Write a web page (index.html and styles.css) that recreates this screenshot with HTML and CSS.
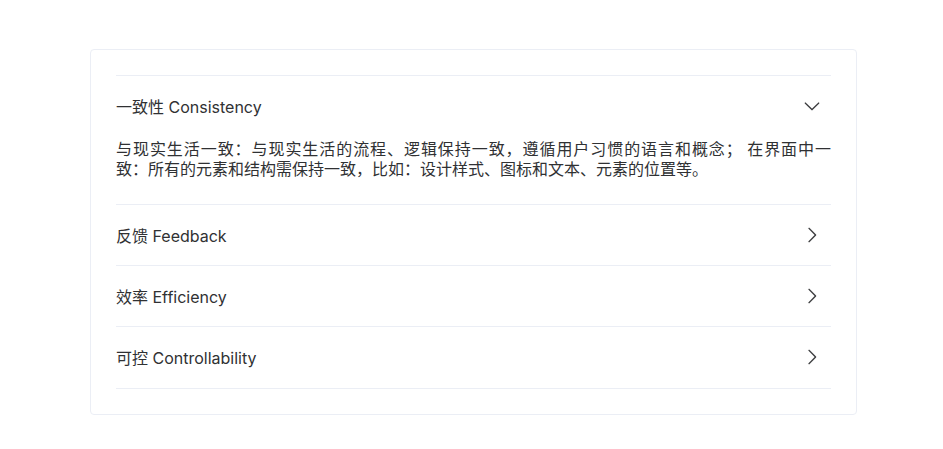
FILE: index.html
```html
<!DOCTYPE html>
<html lang="zh-CN">
<head>
<meta charset="utf-8">
<title>Collapse</title>
<link rel="stylesheet" href="styles.css">
</head>
<body>
<div class="page">
  <div class="card">
    <div class="collapse">
      <div class="item active">
        <div class="header">
          <span class="title">一致性 Consistency</span>
          <svg class="arrow down" viewBox="0 0 1024 1024"><path d="M340.864 149.312a30.592 30.592 0 0 0 0 42.752L652.736 512 340.864 831.872a30.592 30.592 0 0 0 0 42.752 29.12 29.12 0 0 0 41.728 0L714.24 534.336a32 32 0 0 0 0-44.672L382.592 149.376a29.12 29.12 0 0 0-41.728 0z"/></svg>
        </div>
        <div class="content">
          <span class="line first">与现实生活一致：与现实生活的流程、逻辑保持一致，遵循用户习惯的语言和概念； 在界面中一</span>
          <span class="line">致：所有的元素和结构需保持一致，比如：设计样式、图标和文本、元素的位置等。</span>
        </div>
      </div>
      <div class="item">
        <div class="header">
          <span class="title">反馈 Feedback</span>
          <svg class="arrow" viewBox="0 0 1024 1024"><path d="M340.864 149.312a30.592 30.592 0 0 0 0 42.752L652.736 512 340.864 831.872a30.592 30.592 0 0 0 0 42.752 29.12 29.12 0 0 0 41.728 0L714.24 534.336a32 32 0 0 0 0-44.672L382.592 149.376a29.12 29.12 0 0 0-41.728 0z"/></svg>
        </div>
      </div>
      <div class="item">
        <div class="header">
          <span class="title">效率 Efficiency</span>
          <svg class="arrow" viewBox="0 0 1024 1024"><path d="M340.864 149.312a30.592 30.592 0 0 0 0 42.752L652.736 512 340.864 831.872a30.592 30.592 0 0 0 0 42.752 29.12 29.12 0 0 0 41.728 0L714.24 534.336a32 32 0 0 0 0-44.672L382.592 149.376a29.12 29.12 0 0 0-41.728 0z"/></svg>
        </div>
      </div>
      <div class="item last">
        <div class="header">
          <span class="title">可控 Controllability</span>
          <svg class="arrow" viewBox="0 0 1024 1024"><path d="M340.864 149.312a30.592 30.592 0 0 0 0 42.752L652.736 512 340.864 831.872a30.592 30.592 0 0 0 0 42.752 29.12 29.12 0 0 0 41.728 0L714.24 534.336a32 32 0 0 0 0-44.672L382.592 149.376a29.12 29.12 0 0 0-41.728 0z"/></svg>
        </div>
      </div>
    </div>
  </div>
</div>
</body>
</html>
```
FILE: styles.css
```css
html, body {
  margin: 0;
  padding: 0;
  background: #ffffff;
}

body {
  font-family: "Inter", "Noto Sans CJK SC", sans-serif;
  color: #303133;
}

.page {
  padding: 49px 0 0 90px;
}

.card {
  width: 715px;
  padding: 25px;
  border: 1px solid #ebeef5;
  border-radius: 4px;
  background: #ffffff;
}

.collapse {
  border-top: 1px solid #ebeef5;
  border-bottom: 1px solid #ebeef5;
}

.item + .item {
  border-top: 1px solid #ebeef5;
}

.item.last {
  padding-bottom: 1px;
}

.header {
  height: 60px;
  display: flex;
  align-items: center;
  justify-content: space-between;
  font-size: 16px;
  color: #303133;
}

.title {
  line-height: 20px;
  padding-top: 1px;
}

.item.active .title {
  padding-top: 2px;
}

.arrow {
  width: 20px;
  height: 20px;
  margin-right: 9px;
  fill: #303133;
  stroke: #303133;
  stroke-width: 10;
  flex: none;
}

.arrow.down {
  transform: rotate(90deg);
}

.content {
  padding: 3px 0 25px;
  font-size: 16px;
  line-height: 20px;
  color: #303133;
}

.line {
  display: block;
}

.line.first {
  text-align: justify;
  text-align-last: justify;
}
```
